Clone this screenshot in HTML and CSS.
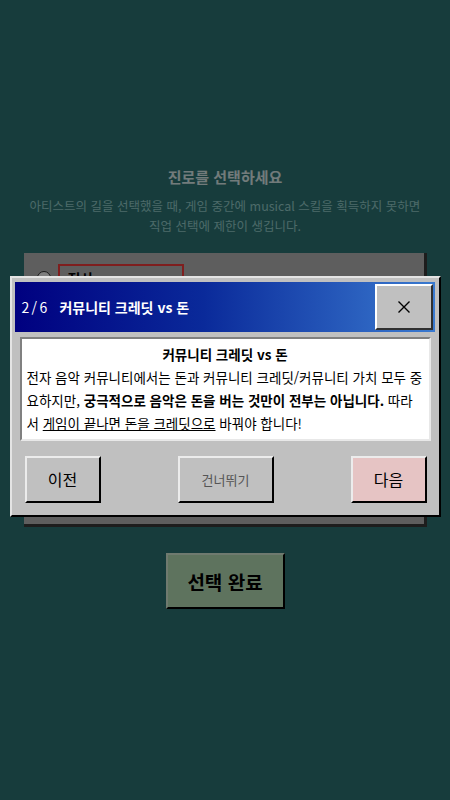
FILE: index.html
```html
<!DOCTYPE html>
<html lang="ko">
<head>
  <meta charset="UTF-8">
  <meta name="viewport" content="width=device-width, initial-scale=1.0">
  <title>진로 선택</title>
  <link rel="stylesheet" href="styles.css">
</head>
<body>
  <div class="page">
    <h1 class="page-title">진로를 선택하세요</h1>
    <p class="page-desc">아티스트의 길을 선택했을 때, 게임 중간에 musical 스킬을 획득하지 못하면<br>직업 선택에 제한이 생깁니다.</p>

    <div class="career-panel">
      <label class="career-option">
        <span class="radio"></span>
        <span class="career-label selected">전사</span>
      </label>
      <label class="career-option">
        <span class="radio"></span>
        <span class="career-label">아티스트</span>
      </label>
      <label class="career-option">
        <span class="radio"></span>
        <span class="career-label">프로듀서</span>
      </label>
      <label class="career-option">
        <span class="radio"></span>
        <span class="career-label">DJ</span>
      </label>
    </div>

    <button class="done-button">선택 완료</button>
  </div>

  <!-- 튜토리얼 모달 -->
  <div class="modal-overlay">
    <div class="dialog">
      <div class="dialog-titlebar">
        <span class="step">2 / 6</span>
        <span class="dialog-title">커뮤니티 크레딧 vs 돈</span>
        <button class="close-button" aria-label="닫기">
          <svg width="14" height="14" viewBox="0 0 14 14"><path d="M1.5 1.5 L12.5 12.5 M12.5 1.5 L1.5 12.5" stroke="#000" stroke-width="1.4" fill="none"/></svg>
        </button>
      </div>

      <div class="dialog-body">
        <div class="body-title">커뮤니티 크레딧 vs 돈</div>
        <div class="body-text">전자 음악 커뮤니티에서는 돈과 커뮤니티 크레딧/커뮤니티 가치 모두 중요하지만, <b>궁극적으로 음악은 돈을 버는 것만이 전부는 아닙니다.</b> 따라서 <u>게임이 끝나면 돈을 크레딧으로</u> 바꿔야 합니다!</div>
      </div>

      <div class="dialog-buttons">
        <button class="win-button">이전</button>
        <button class="win-button skip">건너뛰기</button>
        <button class="win-button next">다음</button>
      </div>
    </div>
  </div>
</body>
</html>
```

FILE: styles.css
```css
/* 기본 스타일 */
body {
  margin: 0;
  background-color: #2f7878;
  font-family: "Noto Sans CJK KR", "Noto Sans", sans-serif;
  min-height: 800px;
}

.page {
  display: flex;
  flex-direction: column;
  align-items: center;
  padding-top: 165px;
}

.page-title {
  margin: 0;
  font-size: 15px;
  line-height: 24px;
  font-weight: bold;
  color: #e4f6f6;
}

.page-desc {
  margin: 7px 0 0;
  font-size: 12.5px;
  line-height: 20px;
  text-align: center;
  color: #98d4d2;
}

/* 진로 선택 패널 */
.career-panel {
  box-sizing: border-box;
  width: 403px;
  height: 274px;
  margin-top: 17px;
  padding: 11px 13px;
  background-color: #bdbdbd;
  border-right: 3px solid #3a3a3a;
  border-bottom: 3px solid #3a3a3a;
  display: flex;
  flex-direction: column;
  gap: 12px;
}

.career-option {
  display: flex;
  align-items: center;
  gap: 7px;
}

.radio {
  width: 12px;
  height: 12px;
  border-radius: 50%;
  background: #fff;
  border: 1px solid #333;
}

.career-label {
  box-sizing: border-box;
  width: 126px;
  padding: 2px 8px;
  font-size: 14px;
  font-weight: bold;
  border: 2px solid transparent;
}

.career-label.selected {
  border-color: #ff3c3c;
}

/* 선택 완료 버튼 */
.done-button {
  margin-top: 26px;
  width: 119px;
  height: 56px;
  font-family: inherit;
  font-size: 19px;
  font-weight: bold;
  color: #000;
  background-color: #bde6bd;
  border: 2px solid;
  border-color: #dff5df #000 #000 #dff5df;
}

/* 모달 */
.modal-overlay {
  position: fixed;
  inset: 0;
  background: rgba(0, 0, 0, 0.5);
  display: flex;
  justify-content: center;
  align-items: center;
  padding-bottom: 8px;
}

.dialog {
  box-sizing: border-box;
  width: 431px;
  padding: 4px 4px 12px 3px;
  background-color: #c0c0c0;
  border: 2px solid;
  border-color: #e4e4e4 #000 #000 #e4e4e4;
}

.dialog-titlebar {
  height: 50px;
  display: flex;
  align-items: center;
  padding-left: 7px;
  background: linear-gradient(to right, #000080 0%, #0a2a9a 45%, #3a7ad0 100%);
  color: #fff;
}

.step {
  font-size: 14px;
  letter-spacing: -0.8px;
  margin-right: 13px;
}

.dialog-title {
  font-size: 14px;
  font-weight: bold;
}

.close-button {
  margin: 0 2px 0 auto;
  width: 58px;
  height: 46px;
  padding: 0;
  background-color: #c0c0c0;
  border: 2px solid;
  border-color: #fff #303030 #303030 #fff;
  display: flex;
  align-items: center;
  justify-content: center;
}

.dialog-body {
  box-sizing: border-box;
  height: 104px;
  margin: 5px 4px 0 5px;
  padding: 4px 5px;
  background: #fff;
  border: 2px solid;
  border-color: #808080 #e8e8e8 #e8e8e8 #808080;
  font-size: 13.5px;
  line-height: 23px;
  color: #000;
}

.body-title {
  text-align: center;
  font-weight: bold;
}

.dialog-buttons {
  display: flex;
  justify-content: space-between;
  margin-top: 15px;
  padding: 0 8px 0 10px;
}

.win-button {
  box-sizing: border-box;
  width: 76px;
  height: 47px;
  font-family: inherit;
  font-size: 16px;
  color: #000;
  background-color: #c0c0c0;
  border: 2px solid;
  border-color: #ececec #000 #000 #ececec;
}

.win-button.skip {
  width: 96px;
  font-size: 13px;
  color: #555;
}

.win-button.next {
  background-color: #e6c4c4;
}
```
